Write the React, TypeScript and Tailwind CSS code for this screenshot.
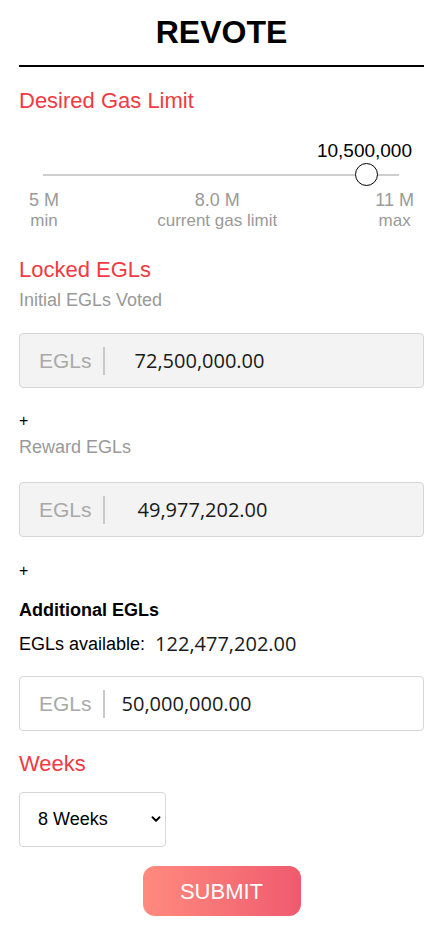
import { ChevronDown } from "lucide-react"

const sans = "font-['Liberation_Sans',Arial,sans-serif]"
const nums = "font-['Open_Sans','Noto_Sans',sans-serif]"

function EglInput({ value, pad, filled }: { value: string; pad: string; filled?: boolean }) {
  return (
    <div
      className={`flex items-center rounded-[4px] border border-[#d6d6d6] ${
        filled ? "bg-[#f3f3f3]" : "bg-white"
      } pl-[19px] h-[55px]`}
    >
      <span className="text-[21px] text-[#a9a9a9] leading-none">EGLs</span>
      <span className="ml-[11px] h-[28px] w-[2px] bg-[#c8c8c8]" />
      <span className={`${nums} text-[20px] text-[#1a1a1a] leading-none ${pad}`}>{value}</span>
    </div>
  )
}

export default function App() {
  return (
    <div className={`${sans} min-h-[938px] bg-white pl-[19px] pr-[24px] text-black`}>
      <h1 className="pt-[14px] pb-[14px] text-center text-[32px] font-bold leading-[37px] border-b-2 border-black">
        REVOTE
      </h1>

      <div className="mt-[21px] text-[22px] leading-[26px] text-[#f23a43]">Desired Gas Limit</div>

      <div className="mt-[26px] mr-[12px] text-right text-[19px] leading-[22px]">10,500,000</div>
      <div className="relative ml-[24px] mr-[25px] h-[27px]">
        <div className="absolute left-0 right-0 top-[12px] h-[2px] bg-[#cfcfcf]" />
        <div className="absolute left-[312px] top-[1px] h-[23px] w-[23px] rounded-full border-[1.5px] border-black bg-white" />
      </div>
      <div className="mx-[10px] flex justify-between text-[#9a9a9a]">
        <div className="text-center">
          <div className="text-[18px] leading-[22px]">5 M</div>
          <div className="text-[17px] leading-[20px]">min</div>
        </div>
        <div className="text-center">
          <div className="text-[18px] leading-[22px]">8.0 M</div>
          <div className="text-[17px] leading-[20px]">current gas limit</div>
        </div>
        <div className="text-center">
          <div className="text-[18px] leading-[22px]">11 M</div>
          <div className="text-[17px] leading-[20px]">max</div>
        </div>
      </div>

      <div className="mt-[26px] text-[22px] leading-[26px] text-[#f23a43]">Locked EGLs</div>
      <div className="mt-[6px] text-[18px] leading-[22px] text-[#999]">Initial EGLs Voted</div>
      <div className="mt-[22px]">
        <EglInput value="72,500,000.00" pad="ml-[30px]" filled />
      </div>

      <div className="mt-[23px] text-[16px] leading-[20px]">+</div>
      <div className="mt-[5px] text-[18px] leading-[22px] text-[#999]">Reward EGLs</div>
      <div className="mt-[24px]">
        <EglInput value="49,977,202.00" pad="ml-[33px]" filled />
      </div>

      <div className="mt-[24px] text-[16px] leading-[20px]">+</div>
      <div className="mt-[19px] text-[18px] font-bold leading-[20px]">Additional EGLs</div>
      <div className="mt-[10px] flex h-[28px] items-center">
        <span className="text-[18px]">EGLs available:</span>
        <span className={`${nums} ml-[10px] text-[20px] text-[#1a1a1a]`}>122,477,202.00</span>
      </div>
      <div className="mt-[18px]">
        <EglInput value="50,000,000.00" pad="ml-[17px]" />
      </div>

      <div className="mt-[20px] text-[22px] leading-[26px] text-[#f23a43]">Weeks</div>
      <div className="relative mt-[15px] w-[147px]">
        <select
          defaultValue="8"
          className="h-[55px] w-full appearance-none rounded-[4px] border border-[#d6d6d6] bg-white pl-[18px] text-[18px] text-black outline-none"
        >
          <option value="4">4 Weeks</option>
          <option value="8">8 Weeks</option>
          <option value="12">12 Weeks</option>
        </select>
        <ChevronDown
          className="pointer-events-none absolute right-[3px] top-[20px] h-[14px] w-[14px] text-black"
          strokeWidth={3.2}
        />
      </div>

      <div className="mt-[19px] flex justify-center">
        <button className="h-[50px] w-[158px] rounded-[12px] bg-gradient-to-r from-[#ff8a7e] to-[#ef5a6e] text-[22px] text-white">
          SUBMIT
        </button>
      </div>
    </div>
  )
}
